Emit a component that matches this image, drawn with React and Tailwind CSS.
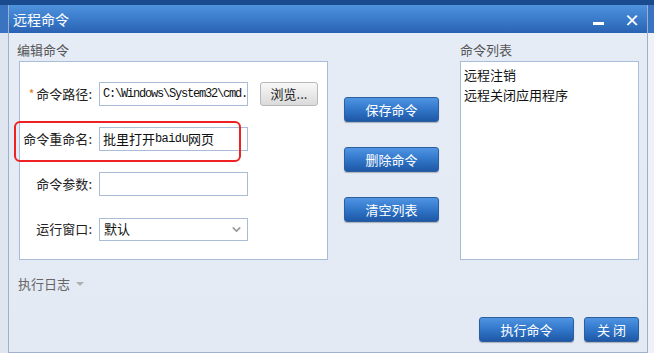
import { ChevronDown } from 'lucide-react';

const cjk = { fontFamily: '"Noto Sans CJK SC", "Noto Sans", sans-serif' };
const mono = { fontFamily: '"Liberation Mono", "Noto Sans CJK SC", monospace' };

function BlueButton({ children, className = '' }) {
  return (
    <button
      className={`h-[25px] rounded-[3px] border border-[#2d5f9f] bg-gradient-to-b from-[#4f95e2] via-[#3176c9] to-[#1e58a6] text-[13px] text-white shadow-[0_1px_1px_rgba(0,0,0,0.25)] flex items-center justify-center ${className}`}
    >
      {children}
    </button>
  );
}

function Field({ label, star, children }) {
  return (
    <div className="flex items-center h-[24px]">
      <div className="w-[73px] pr-[1px] flex justify-end items-center text-[13px] text-[#222]">
        {star && <span className="text-[#e8731c] mr-[2px] text-[12px]">*</span>}
        <span>{label}:</span>
      </div>
      <div className="ml-[6px] flex items-center">{children}</div>
    </div>
  );
}

export default function App() {
  return (
    <div className="w-[654px] h-[357px] bg-white flex flex-col overflow-hidden" style={cjk}>
      {/* desktop strip above */}
      <div className="h-[5px] bg-[#1a4b8e]" />
      <div className="flex h-[348px]">
        <div className="w-[8px] flex flex-col">
          <div className="h-[28px] bg-[#3a73bf]" />
          <div className="flex-1 bg-[#dfe6f0]" />
        </div>

        {/* dialog */}
        <div className="w-[640px] flex flex-col border-x border-b border-[#9fb0cf]">
          {/* title bar */}
          <div className="h-[28px] bg-gradient-to-b from-[#4f92dd] via-[#3b7bcb] to-[#2a62b2] flex items-center pl-[4px] pr-[7px] text-white">
            <span className="text-[14px] leading-none">远程命令</span>
            <div className="ml-auto flex items-center gap-[20px]">
              <div className="w-[11px] h-[3px] bg-white mt-[8px]" />
              <span className="text-[16px] font-bold leading-none">×</span>
            </div>
          </div>

          {/* body */}
          <div className="flex-1 relative bg-gradient-to-b from-[#e5ecf6] to-[#e3eaf4] flex flex-col pl-[10px] pr-[8px]">
            <div className="flex pt-[9px]">
              {/* edit panel */}
              <div className="w-[309px] flex flex-col">
                <div className="text-[13px] leading-[16px] text-[#555] ml-[-2px] h-[19px]">编辑命令</div>
                <div className="h-[199px] bg-white border border-[#a9bcd8] pt-[20px] flex flex-col gap-[21px]">
                  <Field label="命令路径" star>
                    <div className="w-[149px] h-[24px] border border-[#a9bcd8] bg-white flex items-center pl-[3px] overflow-hidden whitespace-nowrap text-[12px] tracking-[-1.2px] text-[#111]" style={mono}>
                      C:\Windows\System32\cmd.
                    </div>
                    <button className="ml-[12px] w-[58px] h-[24px] rounded-[3px] border border-[#b9b9b9] bg-gradient-to-b from-[#f8f8f8] to-[#dadada] text-[13px] text-[#222] flex items-center justify-center">
                      浏览...
                    </button>
                  </Field>
                  <Field label="命令重命名">
                    <div className="w-[149px] h-[24px] border border-[#a9bcd8] bg-white flex items-center pl-[3px] text-[13px] text-[#111] whitespace-nowrap">
                      批里打开<span className="text-[12px] tracking-[-0.6px]" style={mono}>baidu</span>网页
                    </div>
                  </Field>
                  <Field label="命令参数">
                    <div className="w-[149px] h-[24px] border border-[#a9bcd8] bg-white" />
                  </Field>
                  <Field label="运行窗口">
                    <div className="w-[149px] h-[23px] border border-[#a9bcd8] bg-white flex items-center pl-[4px] pr-[4px] text-[13px] text-[#111]">
                      <span>默认</span>
                      <ChevronDown size={13} strokeWidth={3} className="ml-auto text-[#999]" />
                    </div>
                  </Field>
                </div>
              </div>

              {/* action buttons */}
              <div className="ml-[16px] w-[95px] pt-[55px] flex flex-col gap-[25px]">
                <BlueButton>保存命令</BlueButton>
                <BlueButton>删除命令</BlueButton>
                <BlueButton>清空列表</BlueButton>
              </div>

              {/* command list */}
              <div className="ml-[21px] w-[179px] flex flex-col">
                <div className="text-[13px] leading-[16px] text-[#555] h-[19px]">命令列表</div>
                <div className="h-[199px] bg-white border border-[#a9bcd8] pt-[3px] pl-[3px] text-[13px] text-[#111] leading-[20px]">
                  <div>远程注销</div>
                  <div>远程关闭应用程序</div>
                </div>
              </div>
            </div>

            <div className="mt-[16px] ml-[-1px] flex items-center text-[13px] leading-[16px] text-[#666]">
              <span>执行日志</span>
              <span className="ml-[6px] w-0 h-0 border-l-[4px] border-r-[4px] border-t-[4px] border-l-transparent border-r-transparent border-t-[#b0b0b0]" />
            </div>

            <div className="mt-auto mb-[10px] flex justify-end gap-[10px]">
              <BlueButton className="w-[95px]">执行命令</BlueButton>
              <BlueButton className="w-[55px]">关&nbsp;闭</BlueButton>
            </div>

            {/* annotation highlight */}
            <div className="absolute left-[5px] top-[88px] w-[227px] h-[41px] border-2 border-[#ee2222] rounded-[6px]" />
          </div>
        </div>

        <div className="w-[6px] flex flex-col">
          <div className="h-[28px] bg-[#3a73bf]" />
          <div className="flex-1 bg-[#eef2f7]" />
        </div>
      </div>
      <div className="flex-1 bg-white" />
    </div>
  );
}
